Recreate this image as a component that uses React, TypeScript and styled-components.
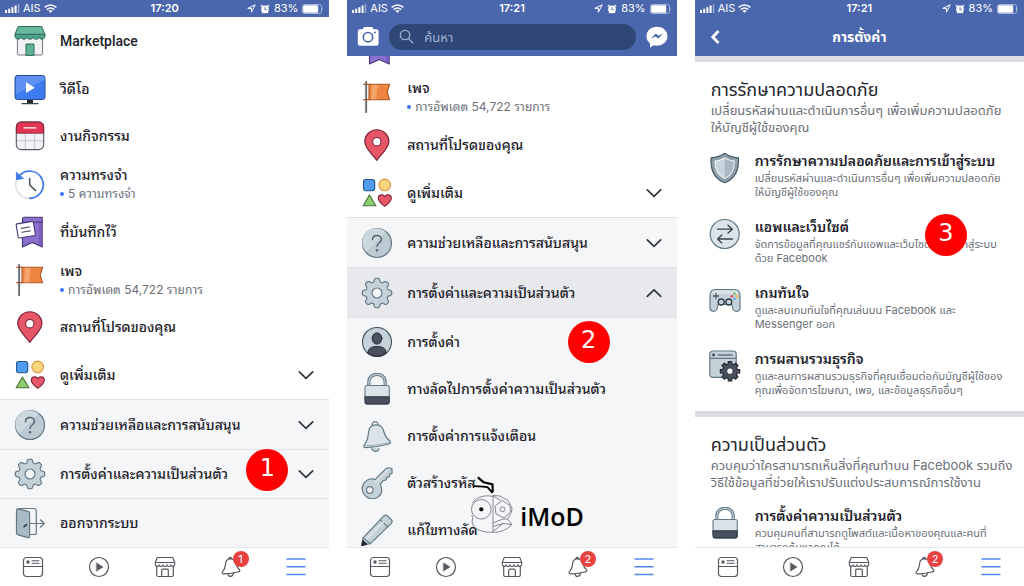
import React from 'react';
import styled, { createGlobalStyle } from 'styled-components';

const bodyFont = 'Inter, "Noto Sans Thai", "Loma", "Noto Sans", sans-serif';
const labelFont = 'Roboto, "Noto Sans Thai Looped", "Noto Looped Thai", Thonburi, Garuda, Waree, "Noto Sans Thai", Loma, sans-serif';

const GlobalStyle = createGlobalStyle`
  * { box-sizing: border-box; }
  body { margin: 0; background: #fff; }
  body, button, input { font-family: ${bodyFont}; }
  ul { list-style: none; margin: 0; padding: 0; }
  h1, h2, h3, p { margin: 0; font-weight: 400; }
  svg { display: block; flex: none; }
`;

const blue = '#4a67ad';

const Page = styled.div`
  display: grid;
  grid-template-columns: repeat(3, minmax(0, 1fr));
  gap: 18px;
  height: 100vh;
`;

const Phone = styled.section`
  position: relative;
  display: flex;
  flex-direction: column;
  min-height: 0;
  background: #fff;
`;

const StatusRow = styled.div`
  display: grid;
  grid-template-columns: 1fr auto 1fr;
  align-items: center;
  flex: none;
  height: 17px;
  padding: 0 5px;
  background: ${blue};
  color: #fff;
  font-size: 11px;
  line-height: 17px;
`;

const StatusGroup = styled.div<{ $end?: boolean }>`
  display: flex;
  align-items: center;
  justify-content: ${(p) => (p.$end ? 'flex-end' : 'flex-start')};
  gap: ${(p) => (p.$end ? '4px' : '3px')};
`;

const Time = styled.span`
  font-weight: 600;
`;

const Header = styled.header`
  display: grid;
  grid-template-columns: 22px 1fr 22px;
  align-items: center;
  gap: 10px;
  flex: none;
  height: 39px;
  padding: 0 10px;
  background: ${blue};
  color: #fff;
`;

const HeaderTitle = styled.h1`
  font-size: 14px;
  line-height: 20px;
  font-weight: 700;
  text-align: center;
`;

const IconButton = styled.button`
  display: flex;
  align-items: center;
  justify-content: center;
  padding: 0;
  border: 0;
  background: none;
  color: inherit;
  cursor: pointer;
`;

const SearchBox = styled.label`
  display: flex;
  align-items: center;
  gap: 10px;
  height: 26px;
  padding: 0 10px;
  border-radius: 13px;
  background: #2f4777;
  color: #a3b1d2;
`;

const SearchInput = styled.input`
  flex: 1;
  min-width: 0;
  padding: 0;
  border: 0;
  outline: 0;
  background: none;
  color: #fff;
  font-size: 13px;
  line-height: 20px;
  &::placeholder { color: #a3b1d2; opacity: 1; }
`;

const Content = styled.main`
  display: flex;
  flex-direction: column;
  flex: 1;
  min-height: 0;
  overflow: hidden;
`;

const MenuList = styled.ul<{ $fill?: boolean }>`
  display: flex;
  flex-direction: column;
  flex: ${(p) => (p.$fill ? '1' : 'none')};
`;

const MenuItem = styled.li<{ $height?: number; $grow?: boolean; $divided?: boolean; $tone?: 'soft' | 'active' }>`
  position: relative;
  display: flex;
  flex: ${(p) => (p.$grow ? '1' : 'none')};
  height: ${(p) => (p.$height ? `${p.$height}px` : 'auto')};
  border-top: ${(p) => (p.$divided ? '1px solid #dfe1e5' : '0')};
  background: ${(p) => (p.$tone === 'active' ? '#e8e9ed' : p.$tone === 'soft' ? '#f5f6f8' : 'transparent')};
`;

const MenuLink = styled.a`
  display: flex;
  align-items: center;
  flex: 1;
  gap: 14px;
  min-width: 0;
  padding: 0 14px;
  border: 0;
  background: none;
  color: #1d2129;
  text-align: left;
  text-decoration: none;
  cursor: pointer;
`;

const MenuText = styled.span`
  display: flex;
  flex-direction: column;
  flex: 1;
  min-width: 0;
`;

const MenuLabel = styled.span`
  font-family: ${labelFont};
  font-size: 14px;
  line-height: 20px;
  font-weight: 500;
  white-space: nowrap;
`;

const MenuNote = styled.span`
  display: flex;
  align-items: center;
  gap: 4px;
  color: #6b6f78;
  font-family: Inter, ${labelFont};
  font-size: 12px;
  line-height: 18px;
  white-space: nowrap;
`;

const Dot = styled.i`
  width: 4px;
  height: 4px;
  border-radius: 50%;
  background: #3b78f0;
`;

const Peek = styled.li`
  display: flex;
  align-items: flex-end;
  flex: none;
  height: 17px;
  padding: 0 14px 8px;
  overflow: hidden;
`;

const SubList = styled.ul`
  flex: 1;
  min-height: 0;
  border-top: 1px solid #dfe1e5;
  background: #f5f6f8;
`;

const StepBadge = styled.span<{ $right: number; $top: number }>`
  position: absolute;
  right: ${(p) => p.$right}px;
  top: ${(p) => p.$top}px;
  width: 42px;
  height: 42px;
  border-radius: 50%;
  background: #fe0000;
  color: #fff;
  font-family: "DejaVu Sans", sans-serif;
  font-size: 24px;
  line-height: 38px;
  text-align: center;
`;

const TabBar = styled.nav`
  display: grid;
  grid-template-columns: repeat(5, 1fr);
  flex: none;
  height: 39px;
  border-top: 1px solid #e6e8eb;
  background: #fff;
  color: #55585f;
`;

const TabIcon = styled.span`
  position: relative;
`;

const Count = styled.span`
  position: absolute;
  top: -5px;
  right: -7px;
  width: 16px;
  height: 16px;
  border-radius: 50%;
  background: #e8413f;
  color: #fff;
  font-size: 11px;
  line-height: 16px;
  text-align: center;
`;

const Band = styled.hr`
  flex: none;
  height: 6px;
  width: 100%;
  margin: 0;
  border: 0;
  background: #dadcdf;
`;

const Group = styled.section`
  flex: none;
  padding: 16px 14px 14px;
`;

const GroupTitle = styled.h2`
  padding-left: 2px;
  color: #23262c;
  font-size: 18px;
  line-height: 24px;
  white-space: nowrap;
`;

const GroupNote = styled.p`
  padding-left: 2px;
  color: #6b6f78;
  font-size: 13px;
  line-height: 17px;
  white-space: nowrap;
`;

const SettingList = styled.ul`
  display: flex;
  flex-direction: column;
  gap: 19px;
  padding-top: 16px;
`;

const SettingItem = styled.li`
  position: relative;
`;

const SettingLink = styled.a`
  display: flex;
  gap: 14px;
  color: #1d2129;
  text-decoration: none;
`;

const SettingTitle = styled.h3`
  margin-bottom: 1px;
  font-family: ${labelFont};
  font-size: 14px;
  line-height: 18px;
  font-weight: 600;
  white-space: nowrap;
`;

const SettingNote = styled.p`
  color: #6b6f78;
  font-size: 11px;
  line-height: 14px;
  white-space: nowrap;
`;

const Watermark = styled.div`
  position: absolute;
  left: 123px;
  top: 474px;
  display: flex;
  align-items: flex-end;
  gap: 6px;
  color: #000;
`;

const WatermarkText = styled.span`
  font-family: "Open Sans", sans-serif;
  font-size: 25px;
  font-weight: 600;
  line-height: 36px;
`;

/* ---------- icons ---------- */

const Icon = ({ children, size = 32, box = 32 }: { children: React.ReactNode; size?: number; box?: number }) => (
  <svg width={size} height={size} viewBox={`0 0 ${box} ${box}`} fill="none" strokeLinecap="round" strokeLinejoin="round" aria-hidden="true">
    {children}
  </svg>
);

const steel = '#647985';
const pale = '#c6d2d9';
const light = '#dbe3e8';

const MarketIcon = () => (
  <Icon>
    <path d="M3.4 12V28.6Q3.4 30 4.8 30H27.2Q28.6 30 28.6 28.6V12Z" fill="#eff1f3" stroke="#72767c" />
    <path d="M12 30V19H20V30Z" fill="#5fb196" stroke="#2e6a5a" />
    <path d="M4.5 1.5H27.7L31 9.5V11.2C31 15 25.2 15 25.2 11.8C25.2 15 19.2 15 19.2 11.8C19.2 15 13 15 13 11.8C13 15 7 15 7 11.8C7 15 1 15 1 11.2V9.5Z" fill="#4ea68c" stroke="#2e6a5a" />
    <path d="M4.9 2H27.3L30 9H2Z" fill="#68b79f" />
    <path d="M1.4 9.3H30.6" stroke="#2e6a5a" />
  </Icon>
);

const VideoIcon = () => (
  <Icon>
    <path d="M13 26H19V30.5H13Z" fill="#20242d" />
    <path d="M8 30.6H24" stroke="#3c404a" strokeWidth="1.3" />
    <rect x="1" y="2.5" width="30" height="24" rx="2.5" fill="#3e7af0" stroke="#2a4c91" />
    <path d="M3.5 3H28.5Q30.5 3 30.5 5V7L2 21V5Q2 3 3.5 3Z" fill="#5f91f5" />
    <path d="M12 9.3L20.8 14.7L12 20.1Z" fill="#fff" />
  </Icon>
);

const CalendarIcon = () => (
  <Icon>
    <rect x="2.3" y="2" width="27.4" height="27.6" rx="5" fill="#f2f3f5" />
    <path d="M2.5 13V7Q2.5 2 7.5 2H24.5Q29.5 2 29.5 7V13Z" fill="#e13551" />
    <path d="M11.3 13.5V29.3M20.7 13.5V29.3M2.5 20.8H29.5" stroke="#c4c6cb" />
    <path d="M2.5 13.2H29.5" stroke="#962640" />
    <rect x="2.3" y="2" width="27.4" height="27.6" rx="5" stroke="#565a66" strokeWidth="1.1" />
    <path d="M2.4 12.5V7Q2.4 2 7.4 2H24.6Q29.6 2 29.6 7V12.5" stroke="#8c2138" />
    <path d="M10 7.8H22" stroke="#fff" strokeWidth="1.2" />
  </Icon>
);

const MemoryIcon = () => (
  <Icon>
    <path d="M2.4 12.5A13.6 13.6 0 0 0 15.7 30.3" stroke="#d5dae3" strokeWidth="1.4" />
    <path d="M5.4 7.8A13.6 13.6 0 1 1 15.7 30.3" stroke="#3d7bed" strokeWidth="1.7" />
    <path d="M2.4 4.6V11.6L9 10.5Z" fill="#3d7bed" stroke="#3d7bed" />
    <path d="M15.7 10.5V17L21.6 22.6" stroke="#40535f" strokeWidth="1.5" />
  </Icon>
);

const SavedIcon = () => (
  <Icon>
    <path d="M8.5 3Q8.5 1.3 10.2 1.3H28.2V31L18.3 26.4L8.5 31Z" fill="#8b70cd" stroke="#463576" strokeWidth="1.1" />
    <path d="M24.5 6.5H27.6V30L24.5 28.6Z" fill="#7a5fbf" />
    <path d="M8.8 6.2H28" stroke="#463576" />
    <path d="M3 7.9L18.3 5.5Q19.2 5.4 19.4 6.3L21.4 18.4Q21.5 19.3 20.7 19.5L5.3 22Q4.4 22.1 4.2 21.2L2.2 9Q2.1 8.1 3 7.9Z" fill="#fff" stroke="#463576" strokeWidth="1.1" />
    <path d="M7.2 12.4L15.6 11M7.8 16.3L16.2 14.9" stroke="#5a5568" strokeWidth="1.1" />
  </Icon>
);

const FlagIcon = () => (
  <Icon>
    <path d="M4.8 .8V31.3" stroke="#8a8f97" strokeWidth="1.8" />
    <path d="M5.6 .8V31.3" stroke="#474c56" strokeWidth=".8" />
    <path d="M2.8 3.3H8M2.8 18.7H8" stroke="#a8552a" strokeWidth="1.3" />
    <path d="M8 3.3H28.6L26.2 11L28.6 18.8H8Z" fill="#ee8540" stroke="#a8552a" strokeWidth="1.1" />
    <path d="M11 4H17Q15 11 15.6 18.2H10Z" fill="#f5a46a" />
  </Icon>
);

const PinIcon = () => (
  <Icon>
    <path d="M15.8 31.3C11.5 25 3.8 19.6 3.8 12.6A12 11.8 0 0 1 27.9 12.6C27.9 19.6 20 25 15.8 31.3Z" fill="#e65667" stroke="#7b2338" strokeWidth="1.2" />
    <circle cx="15.8" cy="12.7" r="4.2" fill="#fff" stroke="#7b2338" strokeWidth="1.1" />
  </Icon>
);

const ShapesIcon = () => (
  <Icon>
    <rect x="2.5" y="2.5" width="11.2" height="11.2" rx="2.4" fill="#4f9df0" stroke="#285287" strokeWidth="1.1" />
    <circle cx="23.7" cy="7.9" r="5.8" fill="#fad67d" stroke="#d99a4a" strokeWidth="1.1" />
    <path d="M8.4 18L14.9 28.8H2.2Z" fill="#8fce6c" stroke="#47703c" strokeWidth="1.1" />
    <path d="M23.8 29.4C20.5 27 17.3 24.6 17.3 21C17.3 17.4 22.3 16.6 23.8 19.8C25.3 16.6 30.3 17.4 30.3 21C30.3 24.6 27.1 27 23.8 29.4Z" fill="#e65667" stroke="#7b2338" strokeWidth="1.1" />
  </Icon>
);

const HelpIcon = () => (
  <Icon>
    <circle cx="16" cy="16" r="14.5" fill="#bccad2" stroke={steel} strokeWidth="1.2" />
    <path d="M5 24.5A13.8 13.8 0 0 1 24.5 5Z" fill="#cdd8de" />
    <path d="M11.5 12.8C11.5 7 20.5 7.2 20.5 12.4C20.5 15.6 16 15.8 16 19.3" stroke="#50636f" strokeWidth="1.4" />
    <circle cx="16" cy="23.3" r="1.2" fill="#50636f" />
  </Icon>
);

const toothedGear = (c: number, outer: number, inner: number) => {
  const points: string[] = [];
  for (let i = 0; i < 8; i += 1) {
    const a = (i * Math.PI) / 4 - Math.PI / 2;
    [[-0.26, inner], [-0.17, outer], [0.17, outer], [0.26, inner]].forEach(([d, r]) => {
      points.push(`${(c + r * Math.cos(a + d)).toFixed(2)} ${(c + r * Math.sin(a + d)).toFixed(2)}`);
    });
  }
  return `M${points.join('L')}Z`;
};

const roundedGear = (c: number, middle: number, depth: number) => {
  const points: string[] = [];
  for (let i = 0; i < 160; i += 1) {
    const a = (i * Math.PI) / 80;
    const r = middle + depth * Math.tanh(1.9 * Math.cos(8 * a) + 0.25);
    points.push(`${(c + r * Math.cos(a)).toFixed(2)} ${(c + r * Math.sin(a)).toFixed(2)}`);
  }
  return `M${points.join('L')}Z`;
};

const GearIcon = () => (
  <Icon>
    <path d={roundedGear(16, 13, 1.8)} fill={pale} stroke={steel} strokeWidth="1.2" />
    <circle cx="16" cy="16" r="5" fill="#f5f6f8" stroke={steel} strokeWidth="1.2" />
  </Icon>
);

const LogoutIcon = () => (
  <Icon>
    <path d="M5 1.5H20Q22.3 1.5 22.3 4V25.5Q22.3 27.5 20 27.5H16" stroke={steel} strokeWidth="1.2" />
    <path d="M2.5 3Q2.5 1.5 4.2 1.8L14 4.4Q15.6 4.9 15.6 6.5V29.3Q15.6 31 14 30.6L4 27.8Q2.5 27.3 2.5 26Z" fill="#a9bac4" stroke={steel} strokeWidth="1.2" />
    <path d="M15.6 16.5H30.3M26.3 12.8L30.3 16.5L26.3 20.2" stroke={steel} strokeWidth="1.2" />
    <path d="M10 19.6L12.6 17.6" stroke="#2c3a44" strokeWidth="1.6" />
  </Icon>
);

const AvatarIcon = () => (
  <Icon>
    <circle cx="16" cy="16" r="14.5" fill={pale} stroke="#45525c" strokeWidth="1.1" />
    <ellipse cx="16" cy="12.5" rx="4.9" ry="5.6" fill="#4b515e" stroke="#272b35" />
    <path d="M7 27C7 22.5 10 20.6 16 20.6C22 20.6 25 22.5 25 27A14 14 0 0 1 7 27Z" fill="#4b515e" stroke="#272b35" />
  </Icon>
);

const LockIcon = () => (
  <Icon>
    <path d="M7.8 13V9C7.8 -1.3 24.2 -1.3 24.2 9V13" stroke={steel} strokeWidth="3.2" />
    <path d="M7.8 13V9C7.8 -1.3 24.2 -1.3 24.2 9V13" stroke={pale} strokeWidth="1.2" />
    <rect x="4" y="12.5" width="24.3" height="18.5" rx="2" fill={light} stroke={steel} strokeWidth="1.1" />
    <path d="M4.2 23.8H28.1V29Q28.1 31 26.1 31H6.2Q4.2 31 4.2 29Z" fill="#4b515e" stroke="#2c313b" />
  </Icon>
);

const BellIcon = () => (
  <Icon>
    <path d="M10.5 27.5C11 32.5 17.5 32.5 18 28.5" fill={pale} stroke={steel} strokeWidth="1.1" />
    <path d="M11.3 5C11 .5 17 .4 17 4.8" stroke={steel} strokeWidth="1.2" />
    <path d="M8 10C9.5 3.6 19.5 2.9 22 9.2C23.5 13.5 23.5 16.6 29 21.2C30 22.8 29.3 23.6 27.8 24C20 26.3 12.5 27.4 4.3 27.6C2.5 27.5 2.2 26 3.3 24.8C7.5 20 6.8 15.4 8 10Z" fill={light} stroke={steel} strokeWidth="1.2" />
    <path d="M4 25.8C12 25.6 20 24.6 28 22.6" stroke="#9fb0ba" />
  </Icon>
);

const KeyIcon = () => (
  <Icon>
    <path d="M25.3 1.2Q28.5 0 31 2V6.5L28.6 7.2L28.3 9.8L25.6 10.4L25 13L22.2 13.7L19.3 17.3C24.5 29 13 35 5.4 29.8C-3.5 23 3 9.5 14.4 12.3Z" fill={pale} stroke={steel} strokeWidth="1.2" />
    <path d="M14.5 14.5L26 3.5" stroke={light} strokeWidth="1.6" />
    <circle cx="8.8" cy="23" r="3.3" fill="#f5f6f8" stroke={steel} strokeWidth="1.2" />
  </Icon>
);

const PencilIcon = () => (
  <Icon>
    <path d="M1 31L2.2 23.7L22.7 2.2Q24.5 .3 26.5 2L30.2 5.5Q32 7.5 30.2 9.4L9.5 29.6Z" fill={pale} stroke={steel} strokeWidth="1.2" />
    <path d="M19.3 5.8L26.8 13M2.2 23.7L9.5 29.6" stroke={steel} strokeWidth="1.1" />
    <path d="M6 24.5L22 8.3" stroke={light} strokeWidth="2" />
    <path d="M.8 31.4L1.6 26.3L5.8 30Z" fill="#20242d" stroke="#20242d" />
  </Icon>
);

const ShieldIcon = () => (
  <Icon>
    <path d="M15.7 1.3C11.5 4.4 7 5.5 2 5.8C1.3 17 4 26.3 15.7 30.8C27.4 26.3 30.1 17 29.4 5.8C24.4 5.5 19.9 4.4 15.7 1.3Z" fill="#8fa0ab" stroke="#4a5c68" strokeWidth="1.2" />
    <path d="M15.7 6C12.5 8 9.5 8.8 6.2 9.2C6 17.5 8 23 15.7 26.3C23.4 23 25.4 17.5 25.2 9.2C21.9 8.8 18.9 8 15.7 6Z" fill="#c9d5dc" stroke="#f3f6f7" strokeWidth="1.2" />
    <path d="M15.7 6.6C19 8.4 21.7 9.2 24.6 9.5C24.8 17.5 22.8 22.6 15.7 25.7Z" fill="#a9bac4" />
  </Icon>
);

const SwapIcon = () => (
  <Icon>
    <circle cx="15.7" cy="16" r="14.5" fill={light} stroke={steel} strokeWidth="1.2" />
    <path d="M8.5 11.2H23M19 7.3L23.3 11.2L19 15.1M23.5 21H9M12.8 17.1L8.6 21L12.8 24.9" stroke="#36444f" strokeWidth="1.3" />
  </Icon>
);

const GamepadIcon = () => (
  <Icon>
    <path d="M6.5 5.5H25.5Q31 5.5 31 12V23.5C31 28.5 24.5 28.5 23.7 24L23 20.5H9L8.3 24C7.5 28.5 1 28.5 1 23.5V12Q1 5.5 6.5 5.5Z" fill={pale} stroke={steel} strokeWidth="1.2" />
    <path d="M7.5 6.5H24.5Q29 6.8 29.8 10H2.2Q3 6.8 7.5 6.5Z" fill={light} />
    <path d="M7 9.5V14.5M4.5 12H9.5" stroke="#4b5c68" strokeWidth="1.3" />
    <circle cx="12.2" cy="18" r="3" fill={pale} stroke="#2f3b45" strokeWidth="1.3" />
    <circle cx="19.8" cy="18" r="3" fill={pale} stroke="#2f3b45" strokeWidth="1.3" />
    <circle cx="25.4" cy="9.8" r="1.3" fill="#74b751" />
    <circle cx="22.8" cy="12.3" r="1.3" fill="#e4475b" />
    <circle cx="28" cy="12.3" r="1.3" fill="#f3b63e" />
    <circle cx="25.4" cy="14.8" r="1.3" fill="#4f9df0" />
  </Icon>
);

const BusinessIcon = () => (
  <Icon>
    <rect x=".8" y="1" width="26.4" height="26.4" rx="3" fill={pale} stroke={steel} strokeWidth="1.2" />
    <path d="M.8 8.4H27.2" stroke={steel} strokeWidth="1.2" />
    <circle cx="4.6" cy="5" r="1.4" fill="#36444f" />
    <path d="M9 5H23" stroke="#36444f" strokeWidth="1.2" />
    <g transform="translate(5 5.2)">
      <path d={toothedGear(16, 9.8, 7.4)} fill="#4b515e" stroke="#22262f" strokeWidth="1.2" />
      <circle cx="16" cy="16" r="3.4" fill="#fff" stroke="#22262f" />
    </g>
  </Icon>
);

const Chevron = ({ up = false }: { up?: boolean }) => (
  <Icon size={18} box={18}>
    <path d={up ? 'M2.3 12.3L9 5.8L15.7 12.3' : 'M2.3 5.8L9 12.3L15.7 5.8'} stroke="#30343b" strokeWidth="1.7" />
  </Icon>
);

const FeedTab = () => (
  <Icon size={22} box={22}>
    <rect x="1.5" y="1.5" width="19" height="19" rx="3" stroke="currentColor" strokeWidth="1.2" />
    <path d="M1.5 10.5H20.5M10 4.8H17M10 7.3H17" stroke="currentColor" strokeWidth="1.1" />
    <circle cx="6" cy="6" r="1.7" fill="currentColor" />
  </Icon>
);

const WatchTab = () => (
  <Icon size={22} box={22}>
    <circle cx="11" cy="11" r="9.5" stroke="currentColor" strokeWidth="1.2" />
    <path d="M8.6 7L15 11L8.6 15Z" fill="currentColor" stroke="currentColor" strokeWidth=".6" />
  </Icon>
);

const StoreTab = () => (
  <Icon size={22} box={22}>
    <path d="M2.7 10V19Q2.7 20.5 4.2 20.5H17.8Q19.3 20.5 19.3 19V10" stroke="currentColor" strokeWidth="1.2" />
    <path d="M7.7 20.3V14.2Q7.7 13.2 8.7 13.2H13.3Q14.3 13.2 14.3 14.2V20.3" stroke="currentColor" strokeWidth="1.2" />
    <path d="M3.2 1.5H18.8L20.8 6.8V8.2C20.8 11 16.9 11 16.9 8.8C16.9 11 13 11 13 8.8C13 11 9 11 9 8.8C9 11 5.1 11 5.1 8.8C5.1 11 1.2 11 1.2 8.2V6.8ZM1.4 6.5H20.6" stroke="currentColor" strokeWidth="1.1" />
  </Icon>
);

const AlertTab = () => (
  <Icon size={22} box={22}>
    <path d="M8 17.8C8 21.3 12.8 21.6 13.5 17.2" stroke="currentColor" strokeWidth="1.2" />
    <path d="M8.8 2.8C8.8 .9 11.6 .9 11.7 2.7M5.8 6.5C6.5 2.3 13.5 1.6 15.2 5.5C16.5 9 16 11 19.5 13.6C20.3 14.7 19.6 15.5 18.5 15.8C13.5 17.4 8.5 18 3.5 17.9C2 17.8 1.7 16.6 2.6 15.6C5.6 12.5 5.2 10 5.8 6.5Z" stroke="currentColor" strokeWidth="1.2" />
  </Icon>
);

const MenuTab = () => (
  <Icon size={22} box={22}>
    <path d="M2 3H20M2 10.8H20M2 18.5H20" stroke="#5386ec" strokeWidth="1.5" />
  </Icon>
);

const CameraIcon = () => (
  <Icon size={22} box={22}>
    <path d="M7 1H15.4L16.6 3.3H19.4Q21.6 3.3 21.6 5.5V17.6Q21.6 19.8 19.4 19.8H3Q.8 19.8 .8 17.6V5.5Q.8 3.3 3 3.3H5.8Z" fill="#fff" />
    <circle cx="11" cy="11.2" r="4.7" stroke={blue} strokeWidth="1.6" />
    <circle cx="17.8" cy="6.6" r="1" fill={blue} />
  </Icon>
);

const MessengerIcon = () => (
  <Icon size={22} box={22}>
    <path d="M11 .8C4.8 .8 .5 5 .5 10.2C.5 13.2 2 15.8 4 17.5V21.5L7.8 19.3C15 20.9 21.5 16.4 21.5 10.2C21.5 5 17.2 .8 11 .8Z" fill="#fff" />
    <path d="M5 12.6L9.8 7.6L12.4 9.8L17 7.6L12.2 12.6L9.6 10.4Z" fill={blue} />
  </Icon>
);

const SearchIcon = () => (
  <Icon size={15} box={15}>
    <circle cx="6" cy="6" r="4.7" stroke="currentColor" strokeWidth="1.3" />
    <path d="M9.6 9.6L14 14" stroke="currentColor" strokeWidth="1.3" />
  </Icon>
);

const BackIcon = () => (
  <Icon size={22} box={22}>
    <path d="M13.5 5L7.8 11L13.5 17" stroke="#fff" strokeWidth="2.8" strokeLinecap="butt" strokeLinejoin="miter" />
  </Icon>
);

const SignalIcon = () => (
  <svg width="15" height="9" viewBox="0 0 15 9" aria-hidden="true">
    <path d="M0 6H2V9H0ZM3.2 4.8H5.2V9H3.2ZM6.4 3.2H8.4V9H6.4ZM9.6 1.5H11.6V9H9.6Z" fill="#fff" />
    <path d="M12.8 0H14.3V9H12.8Z" fill="#fff" opacity=".45" />
  </svg>
);

const WifiIcon = () => (
  <svg width="13" height="9" viewBox="0 0 13 9" fill="none" stroke="#fff" strokeWidth="1.5" aria-hidden="true">
    <path d="M.6 3.3Q6.5 -1.4 12.4 3.3M2.8 5.6Q6.5 2.6 10.2 5.6" />
    <path d="M4.4 6.8Q6.5 5.4 8.6 6.8L6.5 9Z" fill="#fff" stroke="none" />
  </svg>
);

const LocationIcon = () => (
  <svg width="9" height="9" viewBox="0 0 9 9" fill="none" aria-hidden="true">
    <path d="M8.2 .8L.8 4.4H4.4V8.2Z" stroke="#fff" />
  </svg>
);

const AlarmIcon = () => (
  <svg width="10" height="10" viewBox="0 0 10 10" fill="none" aria-hidden="true">
    <circle cx="5" cy="5.4" r="3.8" fill="#fff" />
    <path d="M.8 2.5L2.6 .9M9.2 2.5L7.4 .9M2.2 9.2L3 8.2M7.8 9.2L7 8.2" stroke="#fff" strokeWidth="1.2" />
    <path d="M5 3.2V5.7H6.8" stroke={blue} strokeWidth=".9" />
  </svg>
);

const BatteryIcon = () => (
  <svg width="22" height="10" viewBox="0 0 22 10" aria-hidden="true">
    <rect x=".5" y=".5" width="19" height="9" rx="2.2" fill="none" stroke="#a9b7da" />
    <rect x="1.2" y="1.2" width="15" height="7.6" rx="1.3" fill="#fff" />
    <path d="M20.5 3.2Q21.8 5 20.5 6.8Z" fill="#a9b7da" />
  </svg>
);

const MonkeyLogo = () => (
  <svg width="44" height="60" viewBox="0 0 44 60" fill="none" strokeLinejoin="round" aria-hidden="true">
    <path d="M23 21V58M23 22.5C15 20.5 6 23 2.5 29M1.8 41C4 45 1 47 2.5 50C5 56 13 58.5 23 58.3C30 58.3 37 56 42 50.5L37.5 45L41.5 38" stroke="#85888d" />
    <path d="M23 21.5L30 22L38 26.5L42 34L41.5 38M23 22L31 26.5M23 49L33 45H37.5M23 52.5L33 49.5L42 50.5M33 49.5L23 57.5" stroke="#85888d" />
    <path d="M25 32L32.5 26.5L40 31.5L40.5 38L34 44L26 40Z" stroke="#85888d" />
    <circle cx="11.3" cy="35.3" r="9.8" fill="#f5f6f8" stroke="#85888d" />
    <circle cx="11.3" cy="35.3" r="2.1" fill="#000" />
    <circle cx="32.5" cy="35.3" r="2.5" stroke="#85888d" />
    <path d="M7.8 3.4L13.5 8.2L22.5 10.4L22.7 18" stroke="#000" strokeWidth="2.2" />
    <path d="M4 12.2L13 12.6L17.5 13.2L22.5 19" stroke="#000" strokeWidth="1.8" />
  </svg>
);

/* ---------- shared pieces ---------- */

const StatusBar = ({ time }: { time: string }) => (
  <StatusRow>
    <StatusGroup>
      <SignalIcon />
      <span>AIS</span>
      <WifiIcon />
    </StatusGroup>
    <Time>{time}</Time>
    <StatusGroup $end>
      <LocationIcon />
      <AlarmIcon />
      <span>83%</span>
      <BatteryIcon />
    </StatusGroup>
  </StatusRow>
);

const Tabs = ({ count }: { count: number }) => (
  <TabBar aria-label="Facebook">
    <IconButton aria-label="Feed"><FeedTab /></IconButton>
    <IconButton aria-label="Watch"><WatchTab /></IconButton>
    <IconButton aria-label="Marketplace"><StoreTab /></IconButton>
    <IconButton aria-label="Notifications">
      <TabIcon>
        <AlertTab />
        <Count>{count}</Count>
      </TabIcon>
    </IconButton>
    <IconButton aria-label="Menu"><MenuTab /></IconButton>
  </TabBar>
);

type RowProps = {
  icon: React.ReactNode;
  label: string;
  note?: string;
  height?: number;
  tone?: 'soft' | 'active';
  divided?: boolean;
  toggle?: 'open' | 'closed';
  children?: React.ReactNode;
};

const Row = ({ icon, label, note, height, tone, divided, toggle, children }: RowProps) => (
  <MenuItem $height={height} $grow={!height} $tone={tone} $divided={divided}>
    <MenuLink
      as={toggle ? 'button' : 'a'}
      {...(toggle ? { 'aria-expanded': toggle === 'open' } : { href: '#' })}
    >
      {icon}
      <MenuText>
        <MenuLabel>{label}</MenuLabel>
        {note && <MenuNote><Dot />{note}</MenuNote>}
      </MenuText>
      {toggle && <Chevron up={toggle === 'open'} />}
    </MenuLink>
    {children}
  </MenuItem>
);

type SettingProps = { icon: React.ReactNode; title: string; lines: string[]; children?: React.ReactNode };

const Lines = ({ lines }: { lines: string[] }) => (
  <>
    {lines.map((line, i) => (
      <React.Fragment key={line}>
        {i > 0 && <br />}
        {line}
      </React.Fragment>
    ))}
  </>
);

const Setting = ({ icon, title, lines, children }: SettingProps) => (
  <SettingItem>
    <SettingLink href="#">
      {icon}
      <div>
        <SettingTitle>{title}</SettingTitle>
        <SettingNote><Lines lines={lines} /></SettingNote>
      </div>
    </SettingLink>
    {children}
  </SettingItem>
);

/* ---------- screens ---------- */

const MenuScreen = () => (
  <Phone>
    <StatusBar time="17:20" />
    <Content>
      <MenuList $fill>
        <Row icon={<MarketIcon />} label="Marketplace" />
        <Row icon={<VideoIcon />} label="วิดีโอ" />
        <Row icon={<CalendarIcon />} label="งานกิจกรรม" />
        <Row icon={<MemoryIcon />} label="ความทรงจำ" note="5 ความทรงจำ" />
        <Row icon={<SavedIcon />} label="ที่บันทึกไว้" />
        <Row icon={<FlagIcon />} label="เพจ" note="การอัพเดต 54,722 รายการ" />
        <Row icon={<PinIcon />} label="สถานที่โปรดของคุณ" />
        <Row icon={<ShapesIcon />} label="ดูเพิ่มเติม" toggle="closed" />
      </MenuList>
      <MenuList>
        <Row icon={<HelpIcon />} label="ความช่วยเหลือและการสนับสนุน" height={50} tone="soft" divided toggle="closed" />
        <Row icon={<GearIcon />} label="การตั้งค่าและความเป็นส่วนตัว" height={49} tone="soft" divided toggle="closed">
          <StepBadge $right={41} $top={-1}>1</StepBadge>
        </Row>
        <Row icon={<LogoutIcon />} label="ออกจากระบบ" height={49} tone="soft" divided />
      </MenuList>
    </Content>
    <Tabs count={1} />
  </Phone>
);

const ExpandedScreen = () => (
  <Phone>
    <StatusBar time="17:21" />
    <Header>
      <IconButton aria-label="Camera"><CameraIcon /></IconButton>
      <SearchBox>
        <SearchIcon />
        <SearchInput type="search" placeholder="ค้นหา" aria-label="ค้นหา" />
      </SearchBox>
      <IconButton aria-label="Messenger"><MessengerIcon /></IconButton>
    </Header>
    <Content>
      <MenuList>
        <Peek><SavedIcon /></Peek>
        <Row icon={<FlagIcon />} label="เพจ" note="การอัพเดต 54,722 รายการ" height={48} />
        <Row icon={<PinIcon />} label="สถานที่โปรดของคุณ" height={48} />
        <Row icon={<ShapesIcon />} label="ดูเพิ่มเติม" height={48} toggle="closed" />
        <Row icon={<HelpIcon />} label="ความช่วยเหลือและการสนับสนุน" height={50} tone="soft" divided toggle="closed" />
        <Row icon={<GearIcon />} label="การตั้งค่าและความเป็นส่วนตัว" height={50} tone="active" divided toggle="open" />
      </MenuList>
      <SubList>
        <Row icon={<AvatarIcon />} label="การตั้งค่า" height={47}>
          <StepBadge $right={67} $top={3}>2</StepBadge>
        </Row>
        <Row icon={<LockIcon />} label="ทางลัดไปการตั้งค่าความเป็นส่วนตัว" height={47} />
        <Row icon={<BellIcon />} label="การตั้งค่าการแจ้งเตือน" height={47} />
        <Row icon={<KeyIcon />} label="ตัวสร้างรหัส" height={47} />
        <Row icon={<PencilIcon />} label="แก้ไขทางลัด" height={47} />
      </SubList>
    </Content>
    <Watermark>
      <MonkeyLogo />
      <WatermarkText>iMoD</WatermarkText>
    </Watermark>
    <Tabs count={2} />
  </Phone>
);

const SettingsScreen = () => (
  <Phone>
    <StatusBar time="17:21" />
    <Header>
      <IconButton aria-label="Back"><BackIcon /></IconButton>
      <HeaderTitle>การตั้งค่า</HeaderTitle>
    </Header>
    <Content>
      <Band />
      <Group>
        <GroupTitle>การรักษาความปลอดภัย</GroupTitle>
        <GroupNote>
          <Lines lines={['เปลี่ยนรหัสผ่านและดำเนินการอื่นๆ เพื่อเพิ่มความปลอดภัย', 'ให้บัญชีผู้ใช้ของคุณ']} />
        </GroupNote>
        <SettingList>
          <Setting
            icon={<ShieldIcon />}
            title="การรักษาความปลอดภัยและการเข้าสู่ระบบ"
            lines={['เปลี่ยนรหัสผ่านและดำเนินการอื่นๆ เพื่อเพิ่มความปลอดภัย', 'ให้บัญชีผู้ใช้ของคุณ']}
          />
          <Setting
            icon={<SwapIcon />}
            title="แอพและเว็บไซต์"
            lines={['จัดการข้อมูลที่คุณแชร์กับแอพและเว็บไซต์ที่คุณเข้าสู่ระบบ', 'ด้วย Facebook']}
          >
            <StepBadge $right={43} $top={-4}>3</StepBadge>
          </Setting>
          <Setting
            icon={<GamepadIcon />}
            title="เกมทันใจ"
            lines={['ดูและลบเกมทันใจที่คุณเล่นบน Facebook และ', 'Messenger ออก']}
          />
          <Setting
            icon={<BusinessIcon />}
            title="การผสานรวมธุรกิจ"
            lines={['ดูและลบการผสานรวมธุรกิจที่คุณเชื่อมต่อกับบัญชีผู้ใช้ของ', 'คุณเพื่อจัดการโฆษณา, เพจ, และข้อมูลธุรกิจอื่นๆ']}
          />
        </SettingList>
      </Group>
      <Band />
      <Group>
        <GroupTitle>ความเป็นส่วนตัว</GroupTitle>
        <GroupNote>
          <Lines lines={['ควบคุมว่าใครสามารถเห็นสิ่งที่คุณทำบน Facebook รวมถึง', 'วิธีใช้ข้อมูลที่ช่วยให้เราปรับแต่งประสบการณ์การใช้งาน']} />
        </GroupNote>
        <SettingList>
          <Setting
            icon={<LockIcon />}
            title="การตั้งค่าความเป็นส่วนตัว"
            lines={['ควบคุมคนที่สามารถดูโพสต์และเนื้อหาของคุณและคนที่', 'สามารถค้นหาคุณได้']}
          />
        </SettingList>
      </Group>
    </Content>
    <Tabs count={2} />
  </Phone>
);

export default function App() {
  return (
    <>
      <GlobalStyle />
      <Page>
        <MenuScreen />
        <ExpandedScreen />
        <SettingsScreen />
      </Page>
    </>
  );
}
